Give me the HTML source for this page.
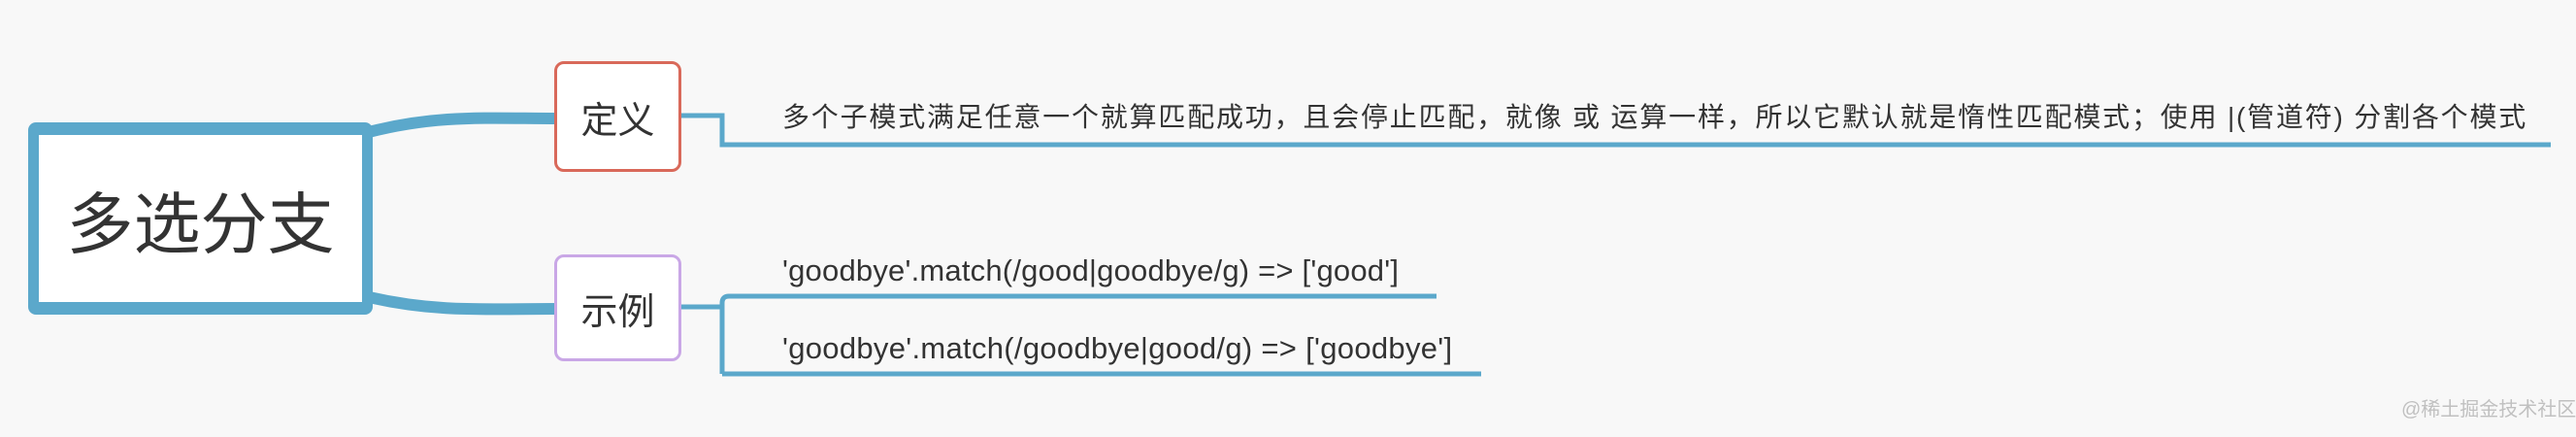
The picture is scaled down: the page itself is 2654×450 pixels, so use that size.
<!DOCTYPE html>
<html><head><meta charset="utf-8"><style>
body{margin:0;width:2654px;height:450px;background:#f8f8f8;position:relative;overflow:hidden;font-family:"Liberation Sans","Noto Sans CJK SC",sans-serif;color:#333}
.box{position:absolute;background:#fff;box-sizing:border-box;display:flex;align-items:center;justify-content:center}
.t{position:absolute;white-space:nowrap;font-size:28px;line-height:1}
</style></head><body>
<svg width="2654" height="450" style="position:absolute;left:0;top:0">
<g fill="none" stroke="#5ba8cb">
<path d="M380 136 C450 118 500 122 575 122" stroke-width="12"/>
<path d="M380 306 C450 322 500 318 575 318" stroke-width="12"/>
<path d="M702 119 H744 V149 H2628" stroke-width="5"/>
<path d="M702 316 H744" stroke-width="5"/>
<path d="M744 385 V312 Q744 305 751 305 H1480" stroke-width="5"/>
<path d="M744 385 H1526" stroke-width="5"/>
</g>
</svg>
<div class="box" style="left:29px;top:126px;width:355px;height:198px;border:11px solid #5ba8cb;border-top-width:13px;border-bottom-width:13px;border-radius:8px;font-size:69px">多选分支</div>
<div class="box" style="left:571px;top:63px;width:131px;height:114px;border:3px solid #d9695a;border-radius:10px;font-size:38px">定义</div>
<div class="box" style="left:571px;top:262px;width:131px;height:110px;border:3px solid #c9a7e6;border-radius:10px;font-size:38px">示例</div>
<div class="t" style="left:806px;top:107px;letter-spacing:1.8px">多个子模式满足任意一个就算匹配成功，且会停止匹配，就像 或 运算一样，所以它默认就是惰性匹配模式；使用 |(管道符) 分割各个模式</div>
<div class="t" style="left:806px;top:263px;font-size:31px;letter-spacing:0.2px">'goodbye'.match(/good|goodbye/g) =&gt; ['good']</div>
<div class="t" style="left:806px;top:343px;font-size:31px;letter-spacing:0.3px">'goodbye'.match(/goodbye|good/g) =&gt; ['goodbye']</div>
<div class="t" style="left:2474px;top:412px;font-size:20px;color:#c0c0c0">@稀土掘金技术社区</div>
</body></html>
